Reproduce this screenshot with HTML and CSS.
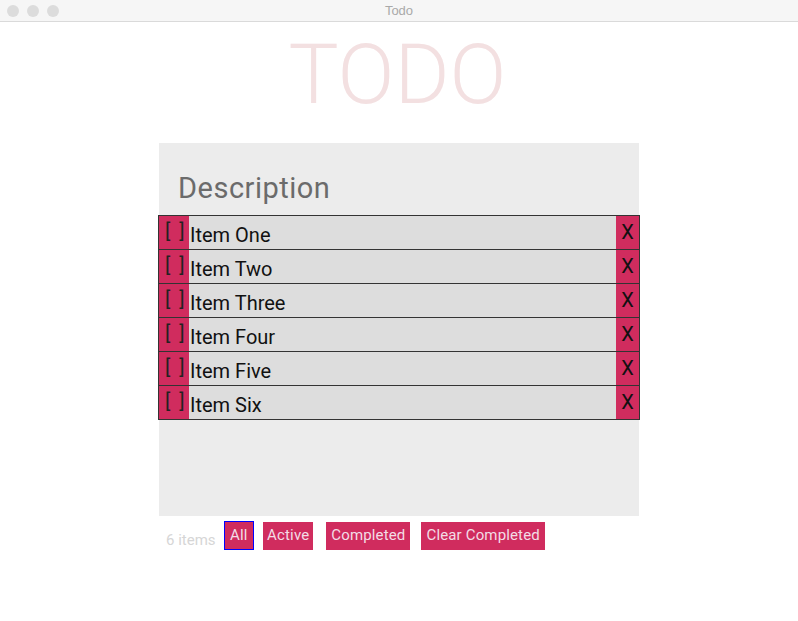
FILE: index.html
```html
<!DOCTYPE html>
<html>
<head>
<meta charset="utf-8">
<title>Todo</title>
<link rel="stylesheet" href="styles.css">
</head>
<body>
<div class="titlebar">
  <div class="lights"><span class="light"></span><span class="light"></span><span class="light"></span></div>
  <div class="wintitle">Todo</div>
</div>
<div class="app">
  <h1 class="heading">TODO</h1>
  <div class="panel">
    <div class="desc">Description</div>
    <ul class="list">
      <li class="row"><span class="check">[ ]</span><span class="label">Item One</span><span class="del">X</span></li>
      <li class="row"><span class="check">[ ]</span><span class="label">Item Two</span><span class="del">X</span></li>
      <li class="row"><span class="check">[ ]</span><span class="label">Item Three</span><span class="del">X</span></li>
      <li class="row"><span class="check">[ ]</span><span class="label">Item Four</span><span class="del">X</span></li>
      <li class="row"><span class="check">[ ]</span><span class="label">Item Five</span><span class="del">X</span></li>
      <li class="row"><span class="check">[ ]</span><span class="label">Item Six</span><span class="del">X</span></li>
    </ul>
  </div>
  <div class="footer">
    <span class="count">6 items</span>
    <span class="btn btn-all">All</span>
    <span class="btn btn-narrow">Active</span>
    <span class="btn">Completed</span>
    <span class="btn">Clear Completed</span>
  </div>
</div>
</body>
</html>
```
FILE: styles.css
```css
* { box-sizing: border-box; }
html, body { margin: 0; padding: 0; background: #fff; }
body { font-family: Roboto, "Noto Sans", sans-serif; }

.titlebar {
  position: relative;
  height: 22px;
  background: #f6f6f6;
  border-bottom: 1px solid #dadada;
}
.lights { display: flex; gap: 8px; padding: 5px 0 0 7px; }
.light { width: 12px; height: 12px; border-radius: 50%; background: #dcdcdc; }
.wintitle {
  position: absolute; left: 0; right: 0; top: 3px;
  text-align: center; font-size: 13px; color: #a9a9a9;
  font-family: "Liberation Sans", sans-serif;
}

.app { width: 480px; margin: 0 auto; }

.heading {
  margin: 3px 0 0 -3px;
  font-size: 84px; font-weight: 300; line-height: 100px;
  text-align: center; color: #f3e0e1;
}

.panel {
  margin-top: 18px;
  height: 373px;
  background: #ececec;
}
.desc {
  padding: 29px 0 11px 19px;
  font-size: 29px; line-height: 32px; letter-spacing: 0.5px; color: #6b6b6b;
}

.list {
  list-style: none; margin: 0 -1px; padding: 0;
  border: 1px solid #333;
  border-bottom: 0;
}
.row {
  display: flex; height: 34px;
  border-bottom: 1px solid #333;
  font-size: 20px; line-height: 24px; color: #111;
}
.check {
  width: 30px; background: #d02c5e;
  padding: 3px 0 0 6px; letter-spacing: 2px; color: #222; white-space: pre;
}
.label { flex: 1; background: #dddddd; padding: 7px 0 0 1px; }
.del {
  width: 23px; background: #d02c5e; text-align: center;
  padding-top: 4px; color: #111;
}

.footer {
  display: flex; align-items: center;
  margin-top: 5px; padding-left: 7px;
  font-size: 15px;
}
.count { color: #d6d6d6; margin-right: 8px; padding-top: 8px; }
.btn {
  display: inline-block; height: 28px; line-height: 27px;
  padding: 0 5px; margin-right: 11px; letter-spacing: 0.15px;
  background: #d02c5e; color: #f3dde6;
}
.btn-all {
  height: 29px; line-height: 27px;
  border: 1px solid #0000ff; padding: 0 5.5px; margin-right: 9px;
}
.btn-narrow { padding: 0 4px; margin-right: 13px; }
```
